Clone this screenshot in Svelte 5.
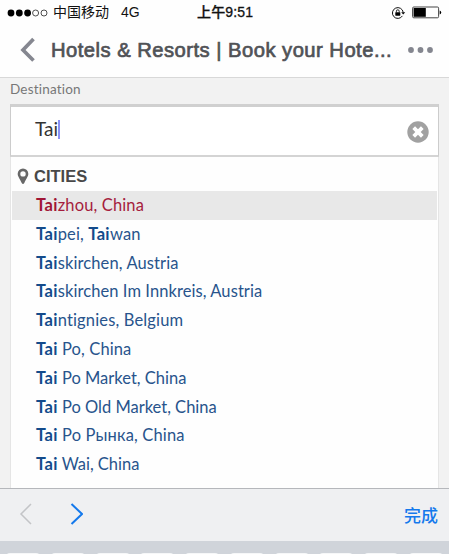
<script>
  const cities = [
    { parts: [['Tai', true], ['zhou, China', false]], active: true, spacing: 0.14 },
    { parts: [['Tai', true], ['pei, ', false], ['Tai', true], ['wan', false]], spacing: 0.12 },
    { parts: [['Tai', true], ['skirchen, Austria', false]], spacing: 0.11 },
    { parts: [['Tai', true], ['skirchen Im Innkreis, Austria', false]], spacing: 0.08 },
    { parts: [['Tai', true], ['ntignies, Belgium', false]], spacing: 0.15 },
    { parts: [['Tai', true], [' Po, China', false]], spacing: 0.11 },
    { parts: [['Tai', true], [' Po Market, China', false]], spacing: 0.01 },
    { parts: [['Tai', true], [' Po Old Market, China', false]], spacing: 0 },
    { parts: [['Tai', true], [' Po Рынка, China', false]], spacing: 0.15 },
    { parts: [['Tai', true], [' Wai, China', false]], spacing: -0.02 }
  ];
</script>

<div class="screen">
  <header>
    <div class="status">
      <svg class="signal" width="42" height="10" viewBox="0 0 42 10">
        <circle cx="4" cy="5" r="3.4" /><circle cx="12.3" cy="5" r="3.4" /><circle cx="20.6" cy="5" r="3.4" />
        <circle class="ring" cx="28.6" cy="5" r="3" /><circle class="ring" cx="37" cy="5" r="3" />
      </svg>
      <span class="carrier">中国移动</span>
      <span class="network">4G</span>
      <span class="time">上午9:51</span>
      <svg class="lock" width="15" height="14" viewBox="0 0 15 14">
        <path d="M11.4 9.900A5.400 5.400 0 1 1 12.200 6.400" fill="none" stroke="#111" stroke-width="1" />
        <path d="M10.200 6.200h4L12.200 8.600z" />
        <rect x="4.300" y="6.200" width="5" height="3.500" rx=".4" />
        <path d="M5.400 6.400V5.200a1.400 1.400 0 0 1 2.800 0v1.200" fill="none" stroke="#111" stroke-width=".9" />
      </svg>
      <svg class="battery" width="30" height="13" viewBox="0 0 30 13">
        <rect x=".6" y="1" width="26" height="10.8" rx="1.2" fill="none" stroke="#444" />
        <rect x="1.6" y="2" width="12.2" height="8.8" />
        <path d="M27.7 4.4q1.5.4 1.5 2t-1.5 2z" />
      </svg>
    </div>
    <div class="titlebar">
      <svg class="back" width="16" height="26" viewBox="0 0 16 26">
        <path d="M13.5 2 3 13l10.500 10.500" fill="none" stroke="#858790" stroke-width="3.7" />
      </svg>
      <h1>Hotels &amp; Resorts | Book your Hote...</h1>
      <svg class="more" width="27" height="8" viewBox="0 0 27 8">
        <circle cx="4" cy="4" r="2.9" /><circle cx="13.500" cy="4" r="2.9" /><circle cx="23" cy="4" r="2.9" />
      </svg>
    </div>
  </header>

  <main>
    <div class="label">Destination</div>
    <div class="field">
      <span class="value">Tai</span><i class="caret"></i>
      <svg class="clear" width="22" height="22" viewBox="0 0 22 22">
        <circle cx="11" cy="11" r="10.700" fill="#a1a1a1" />
        <path d="m6.700 6.700 8.600 8.600m0-8.600-8.600 8.600" stroke="#fff" stroke-width="3.8" />
      </svg>
    </div>
    <div class="results">
      <div class="group">
        <svg width="12" height="17" viewBox="0 0 12 17">
          <path fill="#686868" fill-rule="evenodd" d="M6 .5a5.300 5.300 0 0 1 5.300 5.400C11.300 8.500 9 10.600 7.300 15q-1.300 2.200-2.600 0C3 10.600.7 8.500.7 5.900A5.300 5.300 0 0 1 6 .5Zm0 2.700a2.700 2.700 0 1 0 0 5.400 2.700 2.700 0 0 0 0-5.400Z" />
        </svg>
        <span>CITIES</span>
      </div>
      <ul>
        {#each cities as city}
          <li class:active={city.active}>
            <span style="letter-spacing: {city.spacing}px">{#each city.parts as [text, bold]}{#if bold}<b>{text}</b>{:else}{text}{/if}{/each}</span>
          </li>
        {/each}
      </ul>
    </div>
  </main>

  <div class="toolbar">
    <svg width="64" height="24" viewBox="0 0 64 24" fill="none">
      <path d="M12 2 2 12l10 10" stroke="#c3c4c7" stroke-width="1.5" />
      <path d="M52.500 2 63 12 52.500 22" stroke="#1479ec" stroke-width="2" />
    </svg>
    <span>完成</span>
  </div>
  <div class="keyboard">
    {#each Array(10) as _}<i></i>{/each}
  </div>
</div>

<style>
  .screen {
    width: 449px;
    height: 554px;
    overflow: hidden;
    display: flex;
    flex-direction: column;
    background: #f2f2f2;
    font-family: Lato, "Noto Sans CJK SC", sans-serif;
    font-variant-ligatures: none;
  }
  header {
    flex: none;
    box-sizing: border-box;
    height: 78px;
    background: #fefefe;
    border-bottom: 1px solid #d8d8d8;
    font-family: "Liberation Sans", "Noto Sans CJK SC", sans-serif;
  }
  .status {
    display: flex;
    align-items: center;
    height: 25px;
    padding-left: 7px;
    font-size: 14px;
    line-height: 25px;
    color: #111;
    white-space: nowrap;
  }
  .signal { flex: none; }
  .ring { fill: none; stroke: #222; stroke-width: .8; }
  .carrier { width: 68px; margin-left: 4px; }
  .network { width: 76px; }
  .time { width: 194px; font-weight: 500; letter-spacing: .15px; -webkit-text-stroke: .3px #111; }
  .lock { margin-right: 6px; flex: none; }
  .battery { flex: none; }
  .titlebar { display: flex; align-items: center; height: 50px; padding-left: 20px; }
  .back { flex: none; }
  h1 {
    width: 341px;
    margin: 0 15px;
    font-size: 20.200px;
    font-weight: 400;
    letter-spacing: .48px;
    line-height: 50px;
    color: #505256;
    -webkit-text-stroke: .7px #505256;
    white-space: nowrap;
  }
  .more { flex: none; fill: #84868f; }
  main { flex: none; height: 410px; padding: 0 10px; overflow: hidden; }
  .label { height: 26px; line-height: 22px; font-size: 13.500px; letter-spacing: .2px; color: #777; }
  .field {
    box-sizing: border-box;
    display: flex;
    height: 53px;
    border: 1px solid #ccc;
    border-top: 3px solid #d0d0d0;
    border-bottom: 2px solid #d4d4d4;
    background: #fff;
    padding: 9px 9px 0 24px;
  }
  .value { font-size: 19px; line-height: 26px; color: #333; }
  .caret { width: 2px; height: 19px; margin-top: 4px; background: #8b91f5; }
  .clear { margin: 5px 0 0 auto; }
  .results {
    height: 340px;
    box-sizing: border-box;
    border: 1px solid #e5e5e5;
    border-top: 0;
    background: #fefefe;
    padding: 0 1px;
  }
  .group {
    display: flex;
    align-items: center;
    height: 34px;
    padding: 5px 0 0 5px;
    box-sizing: border-box;
    gap: 5px;
    font: bold 16.500px/29px "Liberation Sans", sans-serif;
    color: #484848;
  }
  ul { margin: 0; padding: 0; list-style: none; }
  li {
    height: 28.800px;
    padding-left: 24px;
    font-size: 16.500px;
    line-height: 28.800px;
    color: #28548c;
    white-space: pre;
  }
  b { font-weight: 700; letter-spacing: .35px; color: #134b8b; }
  .active { background: #e8e8e8; color: #a51d3d; }
  .active b { color: #a01635; }
  .toolbar {
    flex: none;
    box-sizing: border-box;
    display: flex;
    align-items: center;
    justify-content: space-between;
    height: 53px;
    padding: 0 11px 2px 19px;
    border-top: 1px solid #b5b7bb;
    background: #eff0f2;
    font-size: 17px;
    font-weight: 500;
    color: #1479ec;
  }
  .keyboard {
    flex: none;
    height: 13px;
    box-sizing: border-box;
    padding: 12px 6px 0;
    display: flex;
    justify-content: space-between;
    background: #d0d4da;
  }
  .keyboard i { width: 34px; height: 10px; border-radius: 4px 4px 0 0; background: #f6f7f8; }
</style>
